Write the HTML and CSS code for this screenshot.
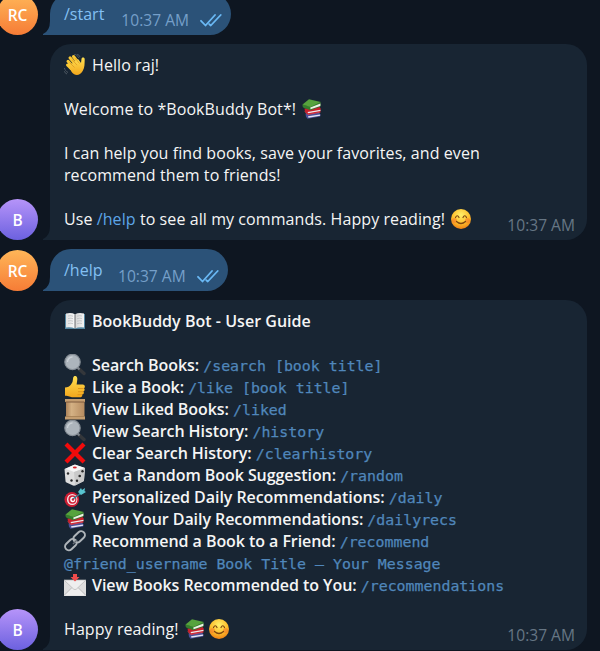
FILE: index.html
```html
<!DOCTYPE html>
<html lang="en">
<head>
<meta charset="utf-8">
<title>BookBuddy Bot</title>
<link rel="stylesheet" href="styles.css">
</head>
<body>
<svg class="defs" width="0" height="0" aria-hidden="true">
<defs>
<linearGradient id="skin" x1="0" y1="0" x2="0" y2="1"><stop offset="0" stop-color="#ffe052"/><stop offset="1" stop-color="#f3a71c"/></linearGradient>
<radialGradient id="face" cx=".5" cy=".3" r=".7"><stop offset="0" stop-color="#fff06a"/><stop offset=".6" stop-color="#fdbf2d"/><stop offset="1" stop-color="#ee7f13"/></radialGradient>
<linearGradient id="paper" x1="0" x2="1"><stop offset="0" stop-color="#ab8259"/><stop offset=".3" stop-color="#d4b184"/><stop offset="1" stop-color="#b58b60"/></linearGradient>
<linearGradient id="page" x1="0" x2="1"><stop offset="0" stop-color="#e2e2e2"/><stop offset=".44" stop-color="#f5f5f5"/><stop offset=".5" stop-color="#77797c"/><stop offset=".57" stop-color="#dadada"/><stop offset="1" stop-color="#f3f3f3"/></linearGradient>
</defs>
<symbol id="wave" viewBox="0 0 22 22"><g stroke-linecap="round" stroke-width="3"><path d="M4 7.300l6 6.700M6 3.800l7 8.500M9.500 2.500l6 8M3.500 11l6 6" stroke="#fbc934" fill="none"/></g><path d="M5 12l9-7 3 4 .5-4c.3-2 3.300-2 3.200.5-.2 4 .2 8-2 11.500-3 5-8 5-11 1z" fill="url(#skin)"/><path d="M5.500 8.500l5 5M8 5.500l5 5.700M11.500 4.500l4 5" stroke="#d89422" stroke-width=".7"/><path d="M10 0c2 .4 4 2 5 4M13 0c1.500.6 2.500 1.700 3 3M.4 14c.5 2 1.800 3.500 3.600 4.500M0 17c.5 1.300 1.600 2.300 3 3" fill="none" stroke="#56606a" stroke-width=".9"/></symbol>
<symbol id="books" viewBox="0 0 22 22"><path d="M4.500 15.500l13-1.500 2 2.500-.3 2L6.500 20.800l-1.500-2z" fill="#4b4f98"/><path d="M7 18.300l12-1.800.2 1.200L7.500 19.800z" fill="#e4e4f2"/><path d="M3.500 10.500l15-1.500 1.200 1.500-.3 3.500-12.400 2.500-3-3z" fill="#c9202c"/><path d="M6.500 14l13-2.200-.1 1.300-12.200 2.200z" fill="#eee9ea"/><path d="M3.800 13.500l3 3 12.600-2.300" fill="none" stroke="#e33b45" stroke-width=".8"/><path d="M1.500 6.500l8 2 10-4.500v4.500L9.500 12.200l-7-2.500q-1.500-1.500-1-3.200z" fill="#347e2c"/><path d="M9.300 9.500L19.500 5.500 19.300 8l-9.800 3.300z" fill="#eff1e8"/><path d="M1.500 6.500L8 1.200l11.800 2.900-10.300 5z" fill="#57a33d"/></symbol>
<symbol id="smile" viewBox="0 0 22 22"><circle cx="11" cy="11" r="10" fill="url(#face)"/><circle cx="4.500" cy="12.500" r="2.500" fill="#f4762a" opacity=".55"/><circle cx="17.500" cy="12.500" r="2.500" fill="#f4762a" opacity=".55"/><path d="M5.500 9.500q1.800-3.500 3.500 0M13 9.500q1.800-3.500 3.500 0M6.500 13.500q4.500 4 9 0" fill="none" stroke="#7d4510" stroke-width="1.200" stroke-linecap="round"/></symbol>
<symbol id="openbook" viewBox="0 0 22 22"><path d="M1 4h20v15H1z" fill="#5486a1"/><path d="M2 3.500q5-1.500 9 .7 4-2.200 9-.7v14q-5-.8-9 1-4-1.800-9-1z" fill="url(#page)"/><path d="M4 6q3-.7 5 .2M4 8.500q3-.7 5 .2M4 11q3-.7 5 .2M4 13.500q3-.7 5 .2M13 6.200q3-.9 5-.2M13 8.700q3-.9 5-.2M13 11.200q3-.9 5-.2M13 13.700q3-.9 5-.2" fill="none" stroke="#b5b7ba" stroke-width=".7"/></symbol>
<symbol id="lens" viewBox="0 0 22 22"><path d="M14 14l6 5.500" stroke="#34373b" stroke-width="3.400" stroke-linecap="round"/><path d="M13.500 13.500l2 2" stroke="#808890" stroke-width="2"/><circle cx="8.500" cy="8" r="7.700" fill="#adb5bc" stroke="#858d95" stroke-width="1.200"/><path d="M3.500 8a5 5 0 0 1 5-5" fill="none" stroke="#cbd1d6" stroke-width="1.300"/></symbol>
<symbol id="thumb" viewBox="0 0 22 22"><path d="M1 11.500q4 0 6-3 2-2.500 2-5.500c0-4 4-4 4.300-.4.200 2-.6 4-.7 6h6.200c2.400 0 2.800 3.400.8 3.700 1.600.5 1.300 3-.4 3.200 1.200.8.700 2.900-1 3 .4 1.800-.8 2.800-2.400 2.800H9c-3 0-4-1.500-8-1.500z" fill="url(#skin)"/><path d="M14 12.500h5.500M14 15.700h5M13.500 18.700h4.500" stroke="#d98b17" stroke-width=".8"/></symbol>
<symbol id="scroll" viewBox="0 0 22 22"><path d="M2 2h18.500v18H2z" fill="url(#paper)"/><path d="M1 1h20v3H1zM1 18.500h20v3H1z" fill="#c39d70"/><path d="M1.500 4h19" stroke="#775339" stroke-width=".9"/><path d="M2 18.500h18" stroke="#967047" stroke-width=".6"/></symbol>
<symbol id="cross" viewBox="0 0 22 22"><path d="M3.500.5l7.500 7.500L18.500.5l3 3L14 11l7.500 7.500-3 3L11 14l-7.500 7.500-3-3L8 11 .5 3.500z" fill="#f20b0b"/></symbol>
<symbol id="die" viewBox="0 0 22 22"><path d="M.5 5l9-4q1-.3 2 0l9.500 3-1 12q0 1-1 1.500L11 21.500q-1 .3-2 0l-6.500-3q-1-.5-1-1.500z" fill="#ddd"/><path d="M1 5q5 1 9 3l11-4-10-3.500z" fill="#f7f7f7"/><path d="M10 8l11-4-1 12q0 1-1 1.500L11 21.500z" fill="#c9c9c9"/><ellipse cx="10.800" cy="3.500" rx="2" ry="1" fill="#d5262d"/><g fill="#292929"><circle cx="4" cy="9.500" r="1.200"/><circle cx="7.500" cy="16.500" r="1.200"/><circle cx="18.500" cy="7.300" r="1.200"/><circle cx="15.700" cy="12" r="1.300"/><circle cx="13" cy="16.700" r="1.200"/></g></symbol>
<symbol id="target" viewBox="0 0 22 22"><ellipse cx="7.800" cy="13.500" rx="7.300" ry="7.500" fill="#cb1d32"/><ellipse cx="8.200" cy="13.500" rx="5.200" ry="5.500" fill="#f3e7e9"/><ellipse cx="8.400" cy="13.500" rx="4" ry="4.200" fill="#d42037"/><ellipse cx="8.700" cy="13.500" rx="2.500" ry="2.700" fill="#fff"/><circle cx="9" cy="13.500" r="1.300" fill="#d42037"/><path d="M9 13l8-6" stroke="#327f91" stroke-width="1.500"/><path d="M14 6l3-4 1 2 3-2-.5 3 1.500 1-5 3z" fill="#57c3cf"/></symbol>
<symbol id="link" viewBox="0 0 22 22"><g fill="none" stroke="#aeb4b9" stroke-width="2"><rect x="-6" y="-3.800" width="13" height="7.600" rx="3.800" transform="translate(6.500 15) rotate(-43)"/><rect x="-7" y="-3.800" width="13" height="7.600" rx="3.800" transform="translate(15.500 6.500) rotate(-43)"/></g><path d="M9 14l4-4" stroke="#697078" stroke-width="1.500"/></symbol>
<symbol id="mail" viewBox="0 0 22 22"><path d="M0 6h22v16H0z" fill="#ddd"/><path d="M0 21.500l8-8h6l8 8" fill="#eee" stroke="#aaa" stroke-width=".7"/><path d="M0 6h22L12.500 15q-1.500 1.300-3 0z" fill="#eee" stroke="#b5b5b5" stroke-width=".7"/><path d="M9 0h4v3h2.500L11 7.500 6.500 3H9z" fill="#ef4b4b"/></symbol>
<symbol id="ticks" viewBox="0 0 22 14"><path d="M1 7.800l4.500 4.700L15 2M9.300 11.200l1.500 1.300L20.700 2" fill="none" stroke="#6ab9f5" stroke-width="1.800" stroke-linecap="round" stroke-linejoin="round"/></symbol>
<symbol id="tail" viewBox="0 0 8 16"><path d="M8 0H7v2Q7 12 0 15v1h8z" fill="currentColor"/></symbol>
</svg>
<main class="chat">
<section class="message">
<div class="avatar orange">RC</div>
<div class="bubble sent start"><svg class="tail"><use href="#tail"/></svg><span class="command">/start</span><time>10:37 AM</time><svg class="ticks"><use href="#ticks"/></svg></div>
</section>
<section class="message">
<div class="avatar purple">B</div>
<div class="bubble received"><svg class="tail"><use href="#tail"/></svg>
<p><svg class="emoji"><use href="#wave"/></svg>Hello raj!</p>
<p class="gap">Welcome to *BookBuddy Bot*! <svg class="emoji after"><use href="#books"/></svg></p>
<p class="gap">I can help you find books, save your favorites, and even<br>recommend them to friends!</p>
<p class="gap">Use <span class="link">/help</span> to see all my commands. Happy reading! <svg class="emoji after"><use href="#smile"/></svg></p>
<time>10:37 AM</time></div>
</section>
<section class="message">
<div class="avatar orange">RC</div>
<div class="bubble sent help"><svg class="tail"><use href="#tail"/></svg><span class="command">/help</span><time>10:37 AM</time><svg class="ticks"><use href="#ticks"/></svg></div>
</section>
<section class="message">
<div class="avatar purple">B</div>
<div class="bubble received"><svg class="tail"><use href="#tail"/></svg>
<p><svg class="emoji"><use href="#openbook"/></svg><b>BookBuddy Bot - User Guide</b></p>
<div class="gap commands">
<p><svg class="emoji"><use href="#lens"/></svg><b>Search Books: </b><code>/search [book title]</code></p>
<p><svg class="emoji"><use href="#thumb"/></svg><b>Like a Book: </b><code>/like [book title]</code></p>
<p><svg class="emoji"><use href="#scroll"/></svg><b>View Liked Books: </b><code>/liked</code></p>
<p><svg class="emoji"><use href="#lens"/></svg><b>View Search History: </b><code>/history</code></p>
<p><svg class="emoji"><use href="#cross"/></svg><b>Clear Search History: </b><code>/clearhistory</code></p>
<p><svg class="emoji"><use href="#die"/></svg><b>Get a Random Book Suggestion: </b><code>/random</code></p>
<p><svg class="emoji"><use href="#target"/></svg><b>Personalized Daily Recommendations: </b><code>/daily</code></p>
<p><svg class="emoji"><use href="#books"/></svg><b>View Your Daily Recommendations: </b><code>/dailyrecs</code></p>
<p><svg class="emoji"><use href="#link"/></svg><b>Recommend a Book to a Friend: </b><code>/recommend</code></p>
<p><code>@friend_username Book Title – Your Message</code></p>
<p><svg class="emoji"><use href="#mail"/></svg><b>View Books Recommended to You: </b><code>/recommendations</code></p>
</div>
<p class="gap">Happy reading! <svg class="emoji after pair"><use href="#books"/></svg><svg class="emoji"><use href="#smile"/></svg></p>
<time>10:37 AM</time></div>
</section>
</main>
</body>
</html>
```
FILE: styles.css
```css
* { box-sizing: border-box; }
body {
  margin: 0;
  height: 651px;
  overflow: hidden;
  background: #0e1621;
  color: #f5f5f5;
  font: 16px/22px "Open Sans", sans-serif;
}
.defs { position: absolute; }
.chat {
  display: flex;
  flex-direction: column;
  gap: 9px;
  margin-top: -7px;
}
.message {
  display: flex;
  align-items: flex-end;
  gap: 12px;
  margin-left: -3px;
}
.avatar {
  width: 41px;
  height: 41px;
  flex: none;
  border-radius: 50%;
  text-align: center;
  font-size: 15.5px;
  font-weight: 600;
  line-height: 42px;
  color: #fff;
}
.orange { background: linear-gradient(#ffb658, #f67c36); }
.purple { background: linear-gradient(#b694f9, #6c61df); }
.bubble {
  position: relative;
  padding: 10px 14px;
  border-radius: 21px 21px 21px 0;
  white-space: nowrap;
}
.received {
  width: 537px;
  background: #182533;
}
.sent {
  display: flex;
  height: 42px;
  padding-right: 8px;
  background: #2b5278;
}
.start { width: 181px; }
.help { width: 178px; }
.tail {
  position: absolute;
  left: -7px;
  bottom: 0;
  width: 8px;
  height: 16px;
  color: #182533;
}
.sent .tail { color: #2b5278; }
p {
  margin: 0;
  height: 22px;
  letter-spacing: 0.08px;
}
p:has(br) { height: 44px; }
.gap { margin-top: 22px; }
b {
  font-weight: 600;
  letter-spacing: 0.03px;
}
.commands b { letter-spacing: -0.06px; }
code {
  color: #5087bb;
  font-family: "DejaVu Sans Mono", monospace;
  font-size: 14.9px;
  line-height: 20px;
  letter-spacing: 0;
  -webkit-text-stroke: 0.25px currentColor;
}
.link { color: #5da5e8; }
.command { color: #83c0f3; }
.emoji {
  width: 22px;
  height: 22px;
  margin-right: 6px;
  vertical-align: top;
}
.after { margin-left: 1px; }
.pair { margin-right: 2px; }
time {
  font-size: 15.6px;
  color: #667684;
}
.received time {
  position: absolute;
  right: 12px;
  bottom: 4px;
}
.sent time {
  margin: 6px 0 0 15.5px;
  color: #759fc9;
}
.start time { margin-left: 17px; }
.ticks {
  flex: none;
  width: 22px;
  height: 14px;
  margin: 10px 0 0 11px;
}
```
